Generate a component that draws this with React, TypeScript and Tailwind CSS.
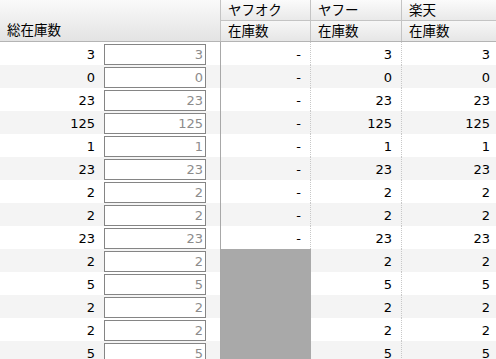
import React from "react";

const rows: { total: number; yafuoku: string | null; yahoo: number; rakuten: number }[] = [
  { total: 3, yafuoku: "-", yahoo: 3, rakuten: 3 },
  { total: 0, yafuoku: "-", yahoo: 0, rakuten: 0 },
  { total: 23, yafuoku: "-", yahoo: 23, rakuten: 23 },
  { total: 125, yafuoku: "-", yahoo: 125, rakuten: 125 },
  { total: 1, yafuoku: "-", yahoo: 1, rakuten: 1 },
  { total: 23, yafuoku: "-", yahoo: 23, rakuten: 23 },
  { total: 2, yafuoku: "-", yahoo: 2, rakuten: 2 },
  { total: 2, yafuoku: "-", yahoo: 2, rakuten: 2 },
  { total: 23, yafuoku: "-", yahoo: 23, rakuten: 23 },
  { total: 2, yafuoku: null, yahoo: 2, rakuten: 2 },
  { total: 5, yafuoku: null, yahoo: 5, rakuten: 5 },
  { total: 2, yafuoku: null, yahoo: 2, rakuten: 2 },
  { total: 2, yafuoku: null, yahoo: 2, rakuten: 2 },
  { total: 5, yafuoku: null, yahoo: 5, rakuten: 5 },
];

const font = { fontFamily: '"DejaVu Sans", "Noto Sans CJK JP", sans-serif' };

export default function App() {
  return (
    <div
      className="w-[496px] h-[359px] overflow-hidden bg-white text-[13px] text-black"
      style={font}
    >
      {/* header */}
      <div className="flex h-[42px] border-b border-[#b4b4b4]">
        <div className="w-[221px] shrink-0 border-r border-[#c4c4c4] bg-gradient-to-b from-[#fafafa] to-[#e3e3e3] flex items-end pl-[7px] pb-[3px]">
          <span className="leading-[16px] text-[13.5px]">総在庫数</span>
        </div>
        {[
          { w: "w-[90px]", name: "ヤフオク", border: "border-r" },
          { w: "w-[91px]", name: "ヤフー", border: "border-r" },
          { w: "flex-1", name: "楽天", border: "" },
        ].map((c) => (
          <div key={c.name} className={`${c.w} shrink-0 flex flex-col ${c.border} border-[#c4c4c4]`}>
            <div className="h-[21px] border-b border-[#c4c4c4] bg-gradient-to-b from-[#fbfbfb] to-[#e9e9e9] pl-[7px] flex items-center">
              <span className="leading-[16px] text-[13.5px] -mt-[1px]">{c.name}</span>
            </div>
            <div className="flex-1 bg-gradient-to-b from-[#f7f7f7] to-[#e6e6e6] pl-[7px] flex items-center">
              <span className="leading-[16px] text-[13.5px]">在庫数</span>
            </div>
          </div>
        ))}
      </div>
      {/* body */}
      {rows.map((r, i) => (
        <div
          key={i}
          className={`flex h-[23px] ${i % 2 === 1 ? "bg-[#f4f4f4]" : "bg-white"}`}
        >
          <div className="w-[221px] shrink-0 border-r border-[#a8a8a8] flex items-center">
            <div className="w-[104px] pr-[9px] text-right leading-[16px] pt-[2px]">{r.total}</div>
            <div className="w-[102px] h-[21px] mt-[1px] border border-[#858585] bg-white text-right pr-[2px] text-[#8c8c8c] leading-[19px]">
              {r.total}
            </div>
          </div>
          {r.yafuoku === null ? (
            <div className="w-[90px] shrink-0 bg-[#a9a9a9]" />
          ) : (
            <div className="w-[90px] shrink-0 border-r border-dotted border-[#c8c8c8] text-right pr-[9px] flex items-center justify-end leading-[16px] pt-[2px]">
              {r.yafuoku}
            </div>
          )}
          <div className="w-[91px] shrink-0 border-r border-dotted border-[#c8c8c8] flex items-center justify-end pr-[9px] leading-[16px] pt-[2px]">
            {r.yahoo}
          </div>
          <div className="flex-1 flex items-center justify-end pr-[6px] leading-[16px] pt-[2px]">
            {r.rakuten}
          </div>
        </div>
      ))}
    </div>
  );
}
